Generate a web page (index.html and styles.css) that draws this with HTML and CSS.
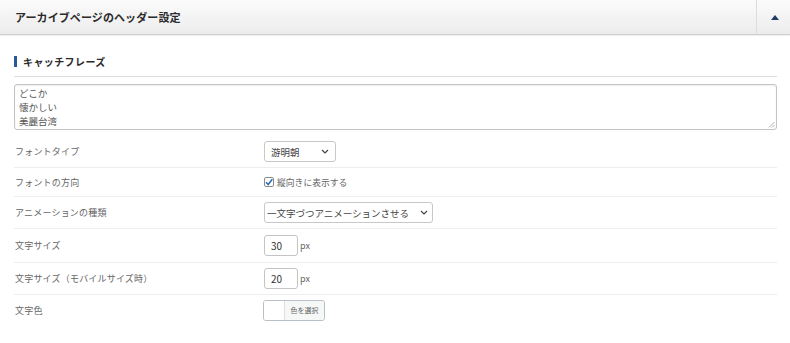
FILE: index.html
```html
<!DOCTYPE html>
<html lang="ja">
<head>
<meta charset="utf-8">
<title>アーカイブページのヘッダー設定</title>
<link rel="stylesheet" href="styles.css">
</head>
<body>
<div class="panel">
  <div class="panel-header">
    <div class="panel-title">アーカイブページのヘッダー設定</div>
    <div class="panel-toggle">
      <svg width="8" height="5" viewBox="0 0 8 5"><path d="M0 5 L4 0 L8 5 Z" fill="#1f3b66"/></svg>
    </div>
  </div>
  <div class="panel-body">
    <h3 class="section-heading"><span class="bar"></span>キャッチフレーズ</h3>
    <div class="textarea">
      <div>どこか</div>
      <div>懐かしい</div>
      <div>美麗台湾</div>
      <svg class="grip" width="7" height="7" viewBox="0 0 7 7"><path d="M6.5 1 L1 6.5 M6.5 4 L4 6.5" stroke="#999" stroke-width="0.8"/></svg>
    </div>
    <div class="row row-first">
      <div class="label">フォントタイプ</div>
      <div class="control">
        <div class="select select-short"><span>游明朝</span>
          <svg width="8" height="5" viewBox="0 0 8 5"><path d="M1 1 L4 4 L7 1" fill="none" stroke="#444" stroke-width="1.2"/></svg>
        </div>
      </div>
    </div>
    <div class="row row-check">
      <div class="label">フォントの方向</div>
      <div class="control">
        <span class="checkbox"><svg width="10" height="10" viewBox="0 0 10 10"><path d="M2 5.2 L4.2 7.5 L8.3 2.3" fill="none" stroke="#2a6cb0" stroke-width="1.5"/></svg></span>
        <span class="check-text">縦向きに表示する</span>
      </div>
    </div>
    <div class="row">
      <div class="label">アニメーションの種類</div>
      <div class="control">
        <div class="select select-long"><span>一文字づつアニメーションさせる</span>
          <svg width="8" height="5" viewBox="0 0 8 5"><path d="M1 1 L4 4 L7 1" fill="none" stroke="#444" stroke-width="1.2"/></svg>
        </div>
      </div>
    </div>
    <div class="row row-tall">
      <div class="label">文字サイズ</div>
      <div class="control">
        <div class="num">30</div><span class="unit">px</span>
      </div>
    </div>
    <div class="row">
      <div class="label">文字サイズ（モバイルサイズ時）</div>
      <div class="control">
        <div class="num">20</div><span class="unit">px</span>
      </div>
    </div>
    <div class="row row-last">
      <div class="label">文字色</div>
      <div class="control">
        <div class="color-btn"><span class="swatch"></span><span class="color-text">色を選択</span></div>
      </div>
    </div>
  </div>
</div>
</body>
</html>
```

FILE: styles.css
```css
* { box-sizing: border-box; }
body {
  margin: 0;
  background: #fff;
  font-family: "Noto Sans CJK JP", "Noto Sans", sans-serif;
  color: #444;
}
.panel-header {
  display: flex;
  height: 35px;
  background: linear-gradient(#fbfbfb, #ececec);
  border-bottom: 1px solid #cfcfcf;
  box-shadow: 0 1px 1px rgba(0,0,0,0.06);
}
.panel-title {
  flex: 1;
  padding-left: 15px;
  font-size: 11px;
  font-weight: 700;
  color: #2a2a2a;
  line-height: 34px;
  letter-spacing: 0.1px;
}
.panel-toggle {
  width: 34px;
  border-left: 1px solid #dcdcdc;
  display: flex;
  align-items: center;
  justify-content: center;
  padding-left: 2px;
}
.panel-body {
  padding: 0 13px 0 14px;
}
.section-heading {
  margin: 18px 0 0;
  display: flex;
  align-items: center;
  font-size: 10px;
  font-weight: 700;
  color: #2a2a2a;
  letter-spacing: 0.4px;
  border-bottom: 1px solid #ddd;
  padding-bottom: 6px;
  height: 24px;
}
.section-heading .bar {
  width: 3px;
  height: 11px;
  background: #2b5896;
  margin-right: 6px;
}
.textarea {
  position: relative;
  margin-top: 7px;
  height: 46px;
  border: 1px solid #c4c4c4;
  border-radius: 3px;
  box-shadow: inset 0 1px 2px rgba(0,0,0,0.07);
  padding: 1px 4px 0;
  font-size: 9.5px;
  line-height: 14px;
  color: #555;
}
.grip {
  position: absolute;
  right: 1px;
  bottom: 1px;
}
.row {
  display: flex;
  align-items: center;
  height: 32px;
  border-bottom: 1px solid #eee;
}
.row-first { margin-top: 6px; }
.row-check { height: 29px; }
.row-tall { height: 34px; }
.row-last { border-bottom: none; height: 30px; }
.label {
  width: 250px;
  padding-left: 1px;
  font-size: 9px;
  color: #666;
  letter-spacing: 0.2px;
}
.control {
  display: flex;
  align-items: center;
}
.select {
  display: flex;
  align-items: center;
  justify-content: space-between;
  height: 21px;
  border: 1px solid #c8c8c8;
  border-radius: 3px;
  padding: 0 6px 0 6px;
  font-size: 9.5px;
  color: #444;
  background: #fff;
}
.select-short { width: 72px; }
.select-long { width: 169px; padding-left: 2px; padding-right: 4px; }
.checkbox {
  width: 10px;
  height: 10px;
  border: 1px solid #8a8a8a;
  border-radius: 2px;
  display: flex;
  align-items: center;
  justify-content: center;
  background: #fff;
}
.checkbox svg { display: block; margin: -1px; }
.check-text {
  margin-left: 3px;
  font-size: 8.8px;
  color: #666;
}
.num {
  width: 34px;
  height: 21px;
  border: 1px solid #c4c4c4;
  border-radius: 3px;
  padding-left: 6px;
  font-size: 10px;
  line-height: 19px;
  color: #333;
}
.unit {
  margin-left: 2px;
  font-size: 9px;
  color: #666;
}
.color-btn {
  display: flex;
  height: 21px;
  width: 62px;
  margin-left: -1px;
  border: 1px solid #b9bfc6;
  border-radius: 3px;
  overflow: hidden;
}
.swatch {
  width: 21px;
  background: #fff;
  border-right: 1px solid #dde1e5;
}
.color-text {
  flex: 1;
  background: #f6f7f7;
  font-size: 7px;
  color: #666;
  display: flex;
  align-items: center;
  justify-content: center;
}
```
